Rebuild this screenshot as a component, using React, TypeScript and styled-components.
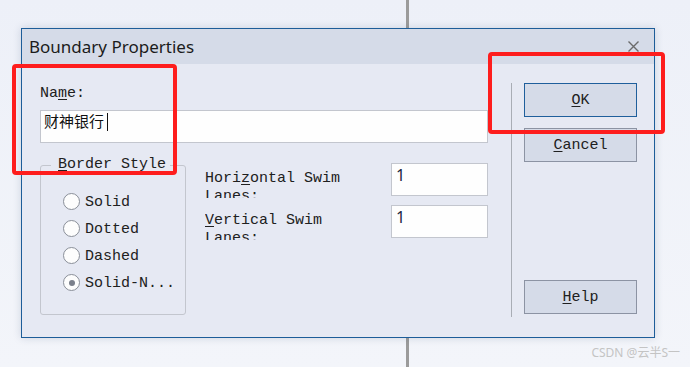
import React from 'react'
import styled, { createGlobalStyle } from 'styled-components'

const GlobalStyle = createGlobalStyle`
    html, body {
        margin: 0;
        padding: 0;
        background: #eef1f8;
    }
`

const mono = `"Liberation Mono", "DejaVu Sans Mono", monospace`
const sans = `"Noto Sans", "Open Sans", Arial, sans-serif`
const cjk = `"Noto Sans", "Noto Sans CJK SC", sans-serif`

const borderStyles = [
    { label: 'Solid', checked: false },
    { label: 'Dotted', checked: false },
    { label: 'Dashed', checked: false },
    { label: 'Solid-N...', checked: true },
]

const App: React.FC = () => {
    return(
        <Desktop>
            <GlobalStyle />
            <BackLine />
            <Dialog>
                <TitleBar>
                    <Title>Boundary Properties</Title>
                    <CloseIcon width="11" height="11" viewBox="0 0 11 11">
                        <path d="M0.5 0.5 L10.5 10.5 M10.5 0.5 L0.5 10.5" stroke="#6b6b6b" strokeWidth="1.4" fill="none" />
                    </CloseIcon>
                </TitleBar>
                <Body>
                    <MainArea>
                        <Label>Na<Key>m</Key>e:</Label>
                        <NameBox>财神银行<Caret /></NameBox>
                        <LowerRow>
                            <GroupBox>
                                <Legend><Key>B</Key>order Style</Legend>
                                <RadioList>
                                    {
                                        borderStyles.map((item, index) => {
                                            return(
                                                <RadioRow key={index}>
                                                    <RadioCircle $checked={item.checked} />
                                                    <RadioText>{item.label}</RadioText>
                                                </RadioRow>
                                            )
                                        })
                                    }
                                </RadioList>
                            </GroupBox>
                            <Fields>
                                <FieldRow>
                                    <FieldLabel>Hori<Key>z</Key>ontal Swim Lanes:</FieldLabel>
                                    <NumberBox>1</NumberBox>
                                </FieldRow>
                                <FieldRow>
                                    <FieldLabel><Key>V</Key>ertical Swim Lanes:</FieldLabel>
                                    <NumberBox>1</NumberBox>
                                </FieldRow>
                            </Fields>
                        </LowerRow>
                    </MainArea>
                    <ButtonColumn>
                        <DialogButton $default><Key>O</Key>K</DialogButton>
                        <DialogButton><Key>C</Key>ancel</DialogButton>
                        <HelpButton><Key>H</Key>elp</HelpButton>
                    </ButtonColumn>
                </Body>
            </Dialog>
            <Highlight style={{ left: 12, top: 64, width: 165, height: 111 }} />
            <Highlight style={{ left: 488, top: 52, width: 177, height: 82 }} />
            <Watermark>CSDN @云半S一</Watermark>
        </Desktop>
    )
}

const Desktop = styled.div`
    position: relative;
    width: 690px;
    height: 367px;
    overflow: hidden;
    box-sizing: border-box;
    padding: 28px 0 0 21px;
    background: linear-gradient(#edf0f8, #f3f5fa);
`
const BackLine = styled.div`
    position: absolute;
    left: 406px;
    top: 0;
    width: 3px;
    height: 100%;
    background-color: #9b9b9b;
`
const Dialog = styled.div`
    position: relative;
    z-index: 1;
    width: 634px;
    height: 310px;
    box-sizing: border-box;
    border: 1px solid #1d5d99;
    background-color: #e6e9f3;
    box-shadow: 0 0 8px rgba(40, 60, 100, 0.18);
    display: flex;
    flex-direction: column;
`
const TitleBar = styled.div`
    height: 35px;
    flex: none;
    background-color: #d5dbe8;
    display: flex;
    align-items: center;
    justify-content: space-between;
    padding: 0 15px 0 7px;
`
const Title = styled.div`
    font-family: ${sans};
    font-size: 17px;
    color: #1b1b1b;
`
const CloseIcon = styled.svg`
    display: block;
`
const Body = styled.div`
    flex: 1;
    display: flex;
`
const MainArea = styled.div`
    width: 489px;
    box-sizing: border-box;
    padding: 21px 23px 0 18px;
    font-family: ${mono};
    font-size: 15px;
    color: #202020;
`
const Label = styled.div`
    line-height: 18px;
`
const Key = styled.span`
    text-decoration: underline;
    text-underline-offset: 2px;
`
const NameBox = styled.div`
    margin-top: 7px;
    height: 33px;
    box-sizing: border-box;
    border: 1px solid #c3c6ce;
    background-color: #fefefe;
    padding: 0 3px;
    font-family: ${cjk};
    font-size: 15px;
    line-height: 20px;
    color: #111;
    display: flex;
    align-items: flex-start;
`
const Caret = styled.span`
    display: inline-block;
    width: 1px;
    height: 18px;
    margin: 2px 0 0 3px;
    background-color: #111;
`
const LowerRow = styled.div`
    margin-top: 13px;
    display: flex;
    gap: 19px;
`
const GroupBox = styled.fieldset`
    width: 146px;
    height: 159px;
    box-sizing: border-box;
    margin: 0;
    padding: 0;
    min-width: 0;
    border: 1px solid #c3c6ce;
    border-radius: 3px;
`
const Legend = styled.legend`
    margin-left: 10px;
    padding: 0 4px 0 7px;
    line-height: 18px;
`
const RadioList = styled.div`
    margin-top: 14px;
    padding-left: 22px;
`
const RadioRow = styled.div`
    height: 27px;
    display: flex;
    align-items: center;
    gap: 5px;
    line-height: 18px;
`
const RadioText = styled.span`
    padding-top: 3px;
`
const RadioCircle = styled.span<{ $checked?: boolean }>`
    width: 17px;
    height: 17px;
    box-sizing: border-box;
    border: 1px solid #8a8f99;
    border-radius: 50%;
    background-color: #fdfdfd;
    display: flex;
    align-items: center;
    justify-content: center;
    &::after {
        content: '';
        width: 6px;
        height: 6px;
        border-radius: 50%;
        background-color: ${props => props.$checked ? '#7b808c' : 'transparent'};
    }
`
const Fields = styled.div`
    flex: 1;
    padding-top: 7px;
    display: flex;
    flex-direction: column;
    gap: 7px;
`
const FieldRow = styled.div`
    display: flex;
    align-items: flex-start;
    gap: 10px;
`
const FieldLabel = styled.div`
    flex: 1;
    margin-top: 7px;
    height: 28px;
    overflow: hidden;
    line-height: 18px;
`
const NumberBox = styled.div`
    width: 97px;
    height: 33px;
    box-sizing: border-box;
    border: 1px solid #c3c6ce;
    background-color: #fefefe;
    padding: 1px 4px 0;
    font-family: ${sans};
    font-size: 16px;
    line-height: 20px;
    color: #1c2540;
`
const ButtonColumn = styled.div`
    margin: 19px 0 20px;
    border-left: 1px solid #a9adb5;
    padding: 0 17px 3px 12px;
    display: flex;
    flex-direction: column;
    gap: 11px;
`
const DialogButton = styled.div<{ $default?: boolean }>`
    width: 113px;
    height: 34px;
    box-sizing: border-box;
    border: 1px solid ${props => props.$default ? '#1f5f9c' : '#8c93a3'};
    background-color: #d5dbe8;
    display: flex;
    align-items: center;
    justify-content: center;
    font-family: ${mono};
    font-size: 15px;
    color: #202020;
`
const HelpButton = styled(DialogButton)`
    margin-top: auto;
`
const Highlight = styled.div`
    position: absolute;
    z-index: 2;
    box-sizing: border-box;
    border: 4px solid #fe1d1d;
    border-radius: 4px;
`
const Watermark = styled.div`
    position: absolute;
    right: 10px;
    bottom: 6px;
    font-family: ${cjk};
    font-size: 12px;
    color: #c4c4c4;
`

export default App
